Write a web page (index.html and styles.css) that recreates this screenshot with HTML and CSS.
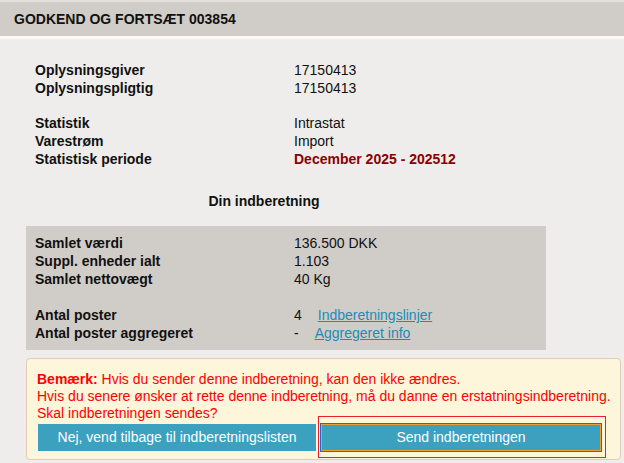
FILE: index.html
```html
<!DOCTYPE html>
<html lang="da">
<head>
    <meta charset="UTF-8">
    <meta name="viewport" content="width=device-width, initial-scale=1.0">
    <title>Godkend og fortsæt</title>
    <link rel="stylesheet" href="styles.css">
</head>
<body>

    <div class="page-header">
        <h1>GODKEND OG FORTSÆT 003854</h1>
    </div>

    <div class="content">
        <div class="info">
            <div class="label">Oplysningsgiver</div>
            <div class="value">17150413</div>
            <div class="label">Oplysningspligtig</div>
            <div class="value">17150413</div>
            <div class="spacer"></div>
            <div class="label">Statistik</div>
            <div class="value">Intrastat</div>
            <div class="label">Varestrøm</div>
            <div class="value">Import</div>
            <div class="label">Statistisk periode</div>
            <div class="value period">December 2025 - 202512</div>
        </div>

        <h2 class="section-title">Din indberetning</h2>

        <div class="info summary">
            <div class="label">Samlet værdi</div>
            <div class="value">136.500 DKK</div>
            <div class="label">Suppl. enheder ialt</div>
            <div class="value">1.103</div>
            <div class="label">Samlet nettovægt</div>
            <div class="value">40 Kg</div>
            <div class="spacer tall"></div>
            <div class="label">Antal poster</div>
            <div class="value">4<a href="#" class="link">Indberetningslinjer</a></div>
            <div class="label">Antal poster aggregeret</div>
            <div class="value">-<a href="#" class="link">Aggregeret info</a></div>
        </div>

        <div class="notice">
            <p><strong>Bemærk:</strong> Hvis du sender denne indberetning, kan den ikke ændres.</p>
            <p>Hvis du senere ønsker at rette denne indberetning, må du danne en erstatningsindberetning.</p>
            <p>Skal indberetningen sendes?</p>
            <div class="actions">
                <button type="button" class="btn">Nej, vend tilbage til indberetningslisten</button>
                <div class="highlight">
                    <button type="button" class="btn btn-send">Send indberetningen</button>
                </div>
            </div>
        </div>
    </div>

</body>
</html>
```

FILE: styles.css
```css
/* farver */
:root {
    --page-bg: #eeedeb;
    --header-bg: #d0ccc8;
    --box-bg: #d0ccc8;
    --text-color: #111;
    --period-color: #8b0000;
    --warn-color: #f00;
    --notice-bg: #fef6da;
    --notice-border: #dfcdb9;
    --btn-bg: #3ba1bf;
    --link-color: #1b8db6;
    --font-family: "Liberation Sans", Arial, Helvetica, sans-serif;
}

* {
    margin: 0;
    padding: 0;
    box-sizing: border-box;
}

body {
    font-family: var(--font-family);
    font-size: 14px;
    line-height: 18px;
    color: var(--text-color);
    background: var(--page-bg);
}

/* overskrift */
.page-header {
    height: 39px;
    background: var(--header-bg);
    border-top: 2px solid #e2e0dd;
    border-bottom: 3px solid #faf9f7;
    padding-left: 14px;
    display: flex;
    align-items: center;
}

.page-header h1 {
    font-size: 14px;
    font-weight: 700;
}

.content {
    padding: 22px 0 0 26px;
}

/* oplysninger */
.info {
    display: grid;
    grid-template-columns: 259px auto;
    padding-left: 9px;
}

.label {
    font-weight: 700;
}

.spacer {
    grid-column: 1 / -1;
    height: 17px;
}

.spacer.tall {
    height: 18px;
}

.period {
    color: var(--period-color);
    font-weight: 700;
}

.section-title {
    width: 476px;
    margin-top: 24px;
    font-size: 14px;
    font-weight: 700;
    text-align: center;
}

.summary {
    width: 520px;
    margin-top: 16px;
    padding: 8px 0 8px 9px;
    background: var(--box-bg);
}

.link {
    margin-left: 16px;
    color: var(--link-color);
    text-decoration: underline;
}

/* bemærkning */
.notice {
    width: 595px;
    margin-top: 8px;
    padding: 12px 0 1px 10px;
    background: var(--notice-bg);
    border: 1px solid var(--notice-border);
    border-radius: 4px;
    color: var(--warn-color);
    line-height: 17px;
}

.notice p {
    white-space: nowrap;
}

.notice strong {
    font-weight: 700;
}

.actions {
    display: flex;
    align-items: center;
    margin: -6px 0 0 1px;
}

.btn {
    width: 278px;
    height: 27px;
    border: none;
    background: var(--btn-bg);
    color: #fff;
    font-family: inherit;
    font-size: 14px;
    cursor: pointer;
}

.highlight {
    display: flex;
    align-items: center;
    width: 288px;
    height: 42px;
    margin-left: 2px;
    padding-left: 2px;
    border: 1px solid #e8202a;
}

.btn-send {
    width: 280px;
    border: 1px solid #eba034;
    box-shadow: 0 0 0 1px #1f6bc9;
}
```
